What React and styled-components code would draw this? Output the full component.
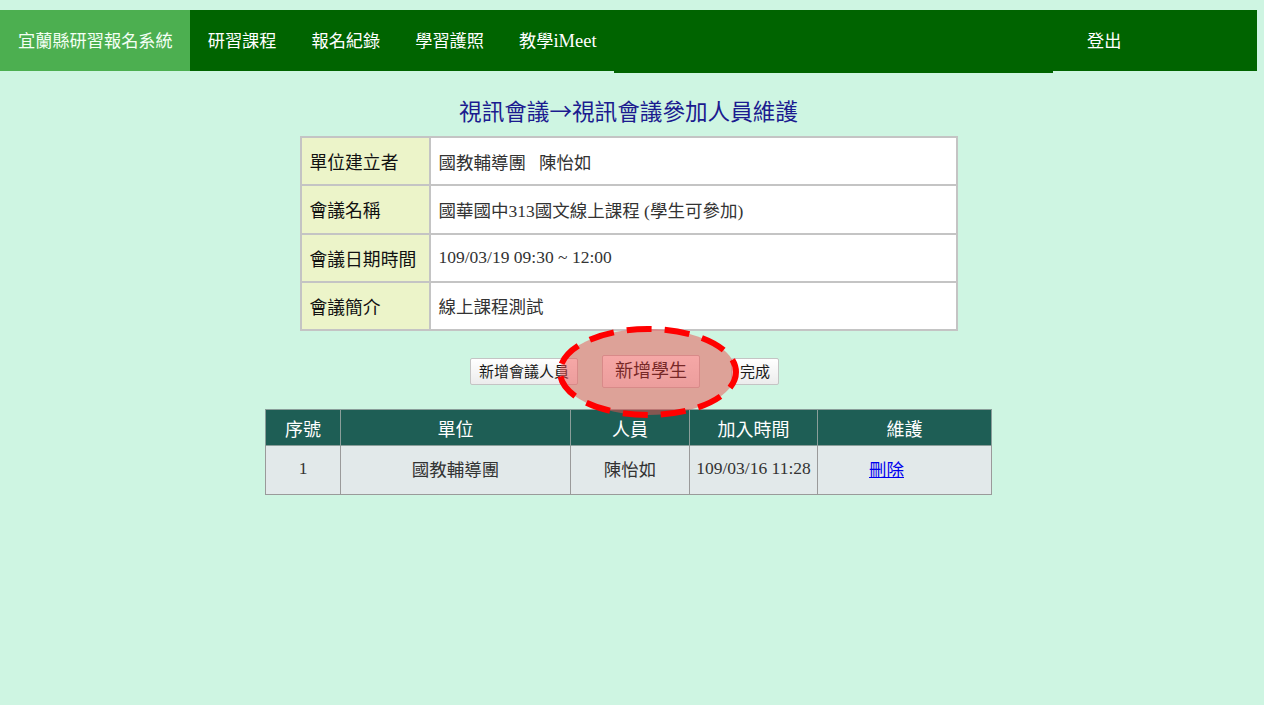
import React from 'react'
import styled, { createGlobalStyle } from 'styled-components'

const GlobalStyle = createGlobalStyle`
  body {
    margin: 0;
    padding-top: 10px;
    background: #cef5e2;
    font-family: "Liberation Serif", "Noto Sans CJK TC", serif;
  }
`

const info = [
  ['單位建立者', '國教輔導團\u00a0\u00a0\u00a0陳怡如'],
  ['會議名稱', '國華國中313國文線上課程 (學生可參加)'],
  ['會議日期時間', '109/03/19 09:30 ~ 12:00'],
  ['會議簡介', '線上課程測試'],
]

const members = [
  { id: 1, unit: '國教輔導團', name: '陳怡如', time: '109/03/16 11:28' },
]

function App() {
  return (
    <Page>
      <GlobalStyle />
      <NavBar>
        <Brand>宜蘭縣研習報名系統</Brand>
        <NavItem>研習課程</NavItem>
        <NavItem>報名紀錄</NavItem>
        <NavItem>學習護照</NavItem>
        <NavItem>
          教學<Latin>iMeet</Latin>
        </NavItem>
        <NavFill />
        <RightMenu>
          <NavItem>登出</NavItem>
        </RightMenu>
      </NavBar>

      <Title>視訊會議→視訊會議參加人員維護</Title>

      <InfoGrid>
        {info.map(([label, value]) => (
          <React.Fragment key={label}>
            <Label>{label}</Label>
            <Value>{value}</Value>
          </React.Fragment>
        ))}
      </InfoGrid>

      <ButtonRow>
        <Button>新增會議人員</Button>
        <Highlight>
          <Button $big>新增學生</Button>
          <Ring width="190" height="98" viewBox="0 0 190 98">
            <ellipse
              cx="95"
              cy="49"
              rx="88"
              ry="43"
              fill="rgba(236,80,77,0.5)"
              stroke="#ff0000"
              strokeWidth="6"
              strokeDasharray="25 13"
              strokeDashoffset="8"
            />
          </Ring>
        </Highlight>
        <Button>完成</Button>
      </ButtonRow>

      <ListTable>
        <colgroup>
          <col style={{ width: 75 }} />
          <col style={{ width: 230 }} />
          <col style={{ width: 119 }} />
          <col style={{ width: 128 }} />
          <col style={{ width: 174 }} />
        </colgroup>
        <thead>
          <tr>
            <Th>序號</Th>
            <Th>單位</Th>
            <Th>人員</Th>
            <Th>加入時間</Th>
            <Th>維護</Th>
          </tr>
        </thead>
        <tbody>
          {members.map((m) => (
            <tr key={m.id}>
              <Td>{m.id}</Td>
              <Td>{m.unit}</Td>
              <Td>{m.name}</Td>
              <Td>{m.time}</Td>
              <Td $action>
                <DeleteLink href="#">刪除</DeleteLink>
              </Td>
            </tr>
          ))}
        </tbody>
      </ListTable>
    </Page>
  )
}

const Page = styled.div`
  width: 1257px;
`

const NavBar = styled.nav`
  display: flex;
  align-items: flex-start;
  height: 61px;
  background: #006400;
`

const Brand = styled.div`
  height: 61px;
  line-height: 63px;
  padding: 0 17px 0 18px;
  background: #4caf50;
  color: #f4fff4;
  font-size: 17.2px;
  white-space: nowrap;
`

const NavItem = styled.div`
  height: 61px;
  line-height: 63px;
  padding: 0 17px 0 18px;
  color: #ffffff;
  font-size: 17.2px;
  white-space: nowrap;
`

const Latin = styled.span`
  font-size: 18.5px;
`

const NavFill = styled.div`
  flex: 1;
  height: 63px;
  background: #006400;
`

const RightMenu = styled.div`
  width: 204px;
  padding-left: 16px;
  box-sizing: border-box;
  display: flex;
`

const Title = styled.h2`
  margin: 25px 0 10px;
  text-align: center;
  line-height: 30px;
  font-family: "Noto Sans CJK TC", sans-serif;
  font-size: 22.6px;
  font-weight: normal;
  color: #1b1b8f;
`

const InfoGrid = styled.div`
  display: grid;
  grid-template-columns: 127px 1fr;
  grid-auto-rows: 46.25px;
  gap: 2px;
  padding: 2px;
  width: 658px;
  box-sizing: border-box;
  margin: 0 auto;
  background: #c4c4c4;
`

const Label = styled.div`
  display: flex;
  align-items: center;
  padding-left: 8px;
  background: #ecf4c9;
  color: #111;
  font-size: 17.8px;
`

const Value = styled.div`
  display: flex;
  align-items: center;
  padding-left: 8px;
  background: #ffffff;
  color: #333;
  font-size: 17.5px;
  white-space: pre;
`

const ButtonRow = styled.div`
  display: flex;
  justify-content: center;
  align-items: center;
  margin: 24px 0 21px;
  padding-right: 8px;
`

const Highlight = styled.span`
  position: relative;
  display: inline-flex;
  margin: 0 31px 0 24px;
`

const Ring = styled.svg`
  position: absolute;
  left: 50%;
  top: 50%;
  transform: translate(calc(-50% - 3px), -50%);
  pointer-events: none;
`

const Button = styled.button`
  font-family: "Liberation Sans", "Noto Sans CJK TC", sans-serif;
  font-size: ${(p) => (p.$big ? '18px' : '15px')};
  line-height: ${(p) => (p.$big ? '25px' : '21px')};
  padding: ${(p) => (p.$big ? '3px 12px' : '2px 8px')};
  color: ${(p) => (p.$big ? '#000' : '#1a1a1a')};
  background: linear-gradient(#ffffff, #ececec);
  border: 1px solid #c4c4c4;
  border-radius: 2px;
`

const ListTable = styled.table`
  width: 726px;
  margin: 0 auto;
  border-collapse: collapse;
  table-layout: fixed;
  border: 1px solid #9a9a9a;
`

const Th = styled.th`
  height: 35px;
  padding: 0;
  background: #1e5e55;
  color: #ffffff;
  font-size: 18px;
  font-weight: normal;
  border: 1px solid #8a9e9a;
`

const Td = styled.td`
  height: 45px;
  padding: 0 ${(p) => (p.$action ? '36px' : '0')} 3px 0;
  background: #e2e9ea;
  color: #333;
  font-size: 17.5px;
  text-align: center;
  border: 1px solid #9a9a9a;
`

const DeleteLink = styled.a`
  color: #0000ee;
  text-decoration: underline;
`

export default App
